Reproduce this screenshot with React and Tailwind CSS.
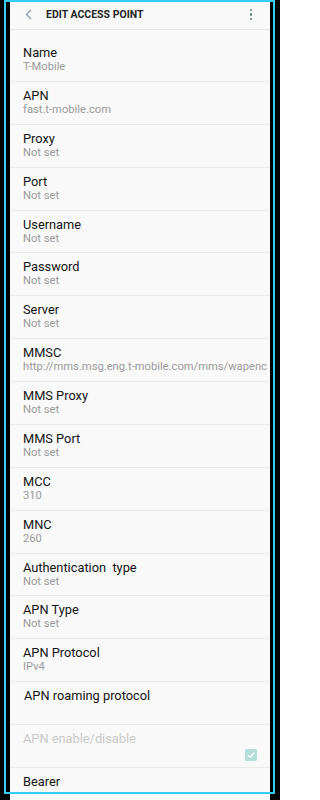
import React from "react";

const rows = [
  { t: "Name", s: "T-Mobile" },
  { t: "APN", s: "fast.t-mobile.com" },
  { t: "Proxy", s: "Not set" },
  { t: "Port", s: "Not set" },
  { t: "Username", s: "Not set" },
  { t: "Password", s: "Not set" },
  { t: "Server", s: "Not set" },
  { t: "MMSC", s: "http://mms.msg.eng.t-mobile.com/mms/wapenc" },
  { t: "MMS Proxy", s: "Not set" },
  { t: "MMS Port", s: "Not set" },
  { t: "MCC", s: "310" },
  { t: "MNC", s: "260" },
  { t: "Authentication\u00a0 type", s: "Not set" },
  { t: "APN Type", s: "Not set" },
  { t: "APN Protocol", s: "IPv4" },
  { t: "APN roaming protocol", s: null, indent: true },
  { t: "APN enable/disable", s: null, disabled: true, check: true },
  { t: "Bearer", s: null },
];

function Row({ r }) {
  return (
    <div className="h-[42.88px] shrink-0 border-b border-[#ebebeb] flex justify-between pl-[13px] pt-[7px] overflow-hidden">
      <div className="flex flex-col min-w-0">
        <div
          className={
            "text-[12.8px] leading-[14px] font-normal whitespace-nowrap " +
            (r.disabled ? "text-[#c9c9c9]" : "text-[#141414]") +
            (r.indent ? " pl-[1px]" : "")
          }
        >
          {r.t}
        </div>
        {r.s && (
          <div className="text-[11.2px] leading-[14px] text-[#9b9b9b] whitespace-nowrap">
            {r.s}
          </div>
        )}
      </div>
      {r.check && (
        <div className="mt-[17px] mr-[13px] w-[12px] h-[12px] rounded-[2px] bg-[#b3ded7] flex items-center justify-center shrink-0">
          <svg width="10" height="10" viewBox="0 0 10 10">
            <path d="M2 5.2 L4.2 7.3 L8.2 2.8" fill="none" stroke="#ffffff" strokeWidth="1.4" />
          </svg>
        </div>
      )}
    </div>
  );
}

export default function App() {
  return (
    <div
      className="relative w-[280px] h-[800px] bg-black overflow-hidden"
      style={{ fontFamily: "Roboto, 'Liberation Sans', sans-serif" }}
    >
      <div className="ml-[10px] w-[260px] h-[800px] bg-[#f9f9f9] flex flex-col">
        <div className="h-[30px] shrink-0 border-b border-[#e6e6e6] flex items-center pl-[15px] pr-[18px]">
          <svg width="8" height="11" viewBox="0 0 8 11" className="mt-[-1px]">
            <path d="M6 0.8 L1.5 5.5 L6 10.2" fill="none" stroke="#8494a2" strokeWidth="1.2" />
          </svg>
          <div className="ml-[13px] text-[10.5px] font-bold text-[#262626]">
            EDIT ACCESS POINT
          </div>
          <div className="ml-auto flex flex-col gap-[2px] items-center">
            <div className="w-[2.5px] h-[2.5px] rounded-full bg-[#5f7d78]" />
            <div className="w-[2.5px] h-[2.5px] rounded-full bg-[#5f7d78]" />
            <div className="w-[2.5px] h-[2.5px] rounded-full bg-[#5f7d78]" />
          </div>
        </div>
        <div className="h-[9px] shrink-0" />
        {rows.map((r, i) => (
          <Row key={i} r={r} />
        ))}
      </div>
      <div className="absolute left-[4px] top-0 w-[271px] h-[794px] border-[2.5px] border-[#37cdf0] pointer-events-none" />
    </div>
  );
}
